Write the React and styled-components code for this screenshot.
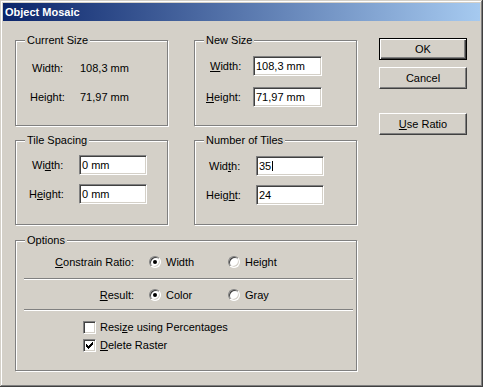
import styled, { createGlobalStyle } from "styled-components"

const GlobalStyle = createGlobalStyle`
    html, body {
        margin: 0;
        padding: 0;
        background: #d4d0c8;
    }
    body {
        font-family: "Liberation Sans", Arial, sans-serif;
        font-size: 11px;
        color: #000;
    }
`

const Window = styled.div`
    box-sizing: border-box;
    width: 483px;
    height: 387px;
    padding: 3px;
    background: #d4d0c8;
    display: flex;
    flex-direction: column;
    box-shadow: inset -1px -1px 0 #404040, inset 1px 1px 0 #d4d0c8,
        inset -2px -2px 0 #808080, inset 2px 2px 0 #fff;
`

const TitleBar = styled.div`
    height: 18px;
    line-height: 18px;
    padding-left: 2px;
    background: linear-gradient(to right, #0a246a, #a6caf0);
    color: #fff;
    font-weight: bold;
    font-size: 11px;
`

const Client = styled.div`
    display: flex;
    padding: 17px 0 0 12px;
`

const Groups = styled.div`
    display: flex;
    flex-direction: column;
    margin-top: 2px;
    width: 342px;
`

const Pairs = styled.div`
    display: grid;
    grid-template-columns: 153px 163px;
    column-gap: 26px;
    row-gap: 14px;
`

const Group = styled.div`
    position: relative;
    box-sizing: border-box;
    height: ${p => p.$h}px;
    border: 1px solid #808080;
    box-shadow: inset 1px 1px 0 #fff, 1px 1px 0 #fff;
    margin-top: ${p => p.$mt || 0}px;
`

const Caption = styled.span`
    position: absolute;
    top: -7px;
    left: 9px;
    padding: 0 2px;
    line-height: 13px;
    background: #d4d0c8;
`

const FieldStack = styled.div`
    display: flex;
    flex-direction: column;
    gap: ${p => p.$gap}px;
    padding-top: ${p => p.$top}px;
`

const FieldRow = styled.div`
    display: grid;
    grid-template-columns: ${p => p.$col}px auto;
    align-items: center;
    height: 20px;
`

const Label = styled.span`
    padding-left: ${p => p.$indent}px;
    white-space: nowrap;
`

const Edit = styled.div`
    box-sizing: border-box;
    display: flex;
    align-items: center;
    width: ${p => p.$w}px;
    height: 20px;
    padding-left: 2px;
    background: #fff;
    border: 1px solid;
    border-color: #808080 #fff #fff #808080;
    box-shadow: inset 1px 1px 0 #404040, inset -1px -1px 0 #d4d0c8;
    white-space: nowrap;
`

const Caret = styled.span`
    display: inline-block;
    width: 1px;
    height: 10px;
    margin-left: 1px;
    background: #000;
`

const Buttons = styled.div`
    display: flex;
    flex-direction: column;
    margin-left: 22px;
`

const Button = styled.div`
    box-sizing: border-box;
    width: 88px;
    height: 22px;
    margin-top: ${p => p.$mt || 0}px;
    display: flex;
    align-items: center;
    justify-content: center;
    background: #d4d0c8;
    border: 1px solid;
    border-color: ${p => (p.$default ? "#000" : "#fff #404040 #404040 #fff")};
    box-shadow: ${p =>
        p.$default
            ? "inset 1px 1px 0 #fff, inset -1px -1px 0 #404040, inset -2px -2px 0 #808080"
            : "inset -1px -1px 0 #808080"};
`

const OptionRow = styled.div`
    display: grid;
    grid-template-columns: 118px 64px auto;
    column-gap: 15px;
    align-items: center;
    height: 21px;
    margin-top: ${p => p.$mt}px;
`

const RowLabel = styled.span`
    text-align: right;
    padding-left: 16px;
`

const Choice = styled.span`
    display: flex;
    align-items: center;
    gap: 5px;
`

const Radio = styled.span`
    position: relative;
    box-sizing: border-box;
    width: 12px;
    height: 12px;
    border-radius: 50%;
    background: #fff;
    border: 1px solid;
    border-color: #808080 #fff #fff #808080;
    box-shadow: inset 1px 1px 0 #404040, inset -1px -1px 0 #d4d0c8;

    &::after {
        content: "";
        display: ${p => (p.$on ? "block" : "none")};
        position: absolute;
        left: 3px;
        top: 3px;
        width: 4px;
        height: 4px;
        border-radius: 50%;
        background: #000;
    }
`

const Separator = styled.div`
    height: 1px;
    width: 329px;
    margin: ${p => p.$mt}px 0 1px 8px;
    background: #808080;
    box-shadow: 0 1px 0 #fff;
`

const CheckRow = styled.div`
    display: flex;
    align-items: center;
    gap: 4px;
    height: 18px;
    padding-left: 67px;
    margin-top: ${p => p.$mt || 0}px;
`

const Box = styled.span`
    box-sizing: border-box;
    width: 13px;
    height: 13px;
    display: flex;
    align-items: center;
    justify-content: center;
    background: #fff;
    border: 1px solid;
    border-color: #808080 #fff #fff #808080;
    box-shadow: inset 1px 1px 0 #404040, inset -1px -1px 0 #d4d0c8;
`

const Check = () => (
    <svg width="7" height="7" viewBox="0 0 7 7" shapeRendering="crispEdges">
        <path d="M6 0h1v3h-1zM5 1h1v3h-1zM4 2h1v3h-1zM3 3h1v3h-1zM2 4h1v3h-1zM1 3h1v3h-1zM0 2h1v3h-1z" fill="#000" />
    </svg>
)

const App = () => {
    return (
        <Window>
            <GlobalStyle />
            <TitleBar>Object Mosaic</TitleBar>
            <Client>
                <Groups>
                    <Pairs>
                        <Group $h={86}>
                            <Caption>Current Size</Caption>
                            <FieldStack $top={17} $gap={9}>
                                <FieldRow $col={64}>
                                    <Label $indent={16}>Width:</Label>
                                    <span>108,3 mm</span>
                                </FieldRow>
                                <FieldRow $col={64}>
                                    <Label $indent={14}>Height:</Label>
                                    <span>71,97 mm</span>
                                </FieldRow>
                            </FieldStack>
                        </Group>
                        <Group $h={86}>
                            <Caption>New Size</Caption>
                            <FieldStack $top={15} $gap={11}>
                                <FieldRow $col={58}>
                                    <Label $indent={15}><u>W</u>idth:</Label>
                                    <Edit $w={69}>108,3 mm</Edit>
                                </FieldRow>
                                <FieldRow $col={58}>
                                    <Label $indent={11}><u>H</u>eight:</Label>
                                    <Edit $w={69}>71,97 mm</Edit>
                                </FieldRow>
                            </FieldStack>
                        </Group>
                        <Group $h={85}>
                            <Caption>Tile Spacing</Caption>
                            <FieldStack $top={14} $gap={9}>
                                <FieldRow $col={63}>
                                    <Label $indent={16}>Wi<u>d</u>th:</Label>
                                    <Edit $w={68}>0 mm</Edit>
                                </FieldRow>
                                <FieldRow $col={63}>
                                    <Label $indent={13}>H<u>e</u>ight:</Label>
                                    <Edit $w={68}>0 mm</Edit>
                                </FieldRow>
                            </FieldStack>
                        </Group>
                        <Group $h={85}>
                            <Caption>Number of Tiles</Caption>
                            <FieldStack $top={15} $gap={9}>
                                <FieldRow $col={61}>
                                    <Label $indent={14}>Wid<u>t</u>h:</Label>
                                    <Edit $w={68}>35<Caret /></Edit>
                                </FieldRow>
                                <FieldRow $col={61}>
                                    <Label $indent={11}>Heig<u>h</u>t:</Label>
                                    <Edit $w={68}>24</Edit>
                                </FieldRow>
                            </FieldStack>
                        </Group>
                    </Pairs>
                    <Group $h={131} $mt={15}>
                        <Caption>Options</Caption>
                        <OptionRow $mt={10}>
                            <RowLabel><u>C</u>onstrain Ratio:</RowLabel>
                            <Choice><Radio $on />Width</Choice>
                            <Choice><Radio />Height</Choice>
                        </OptionRow>
                        <Separator $mt={6} />
                        <OptionRow $mt={5}>
                            <RowLabel><u>R</u>esult:</RowLabel>
                            <Choice><Radio $on />Color</Choice>
                            <Choice><Radio />Gray</Choice>
                        </OptionRow>
                        <Separator $mt={4} />
                        <CheckRow $mt={8}>
                            <Box />
                            <span>Resi<u>z</u>e using Percentages</span>
                        </CheckRow>
                        <CheckRow>
                            <Box><Check /></Box>
                            <span><u>D</u>elete Raster</span>
                        </CheckRow>
                    </Group>
                </Groups>
                <Buttons>
                    <Button $default>OK</Button>
                    <Button $mt={7}>Cancel</Button>
                    <Button $mt={24}><span><u>U</u>se Ratio</span></Button>
                </Buttons>
            </Client>
        </Window>
    )
}

export default App
